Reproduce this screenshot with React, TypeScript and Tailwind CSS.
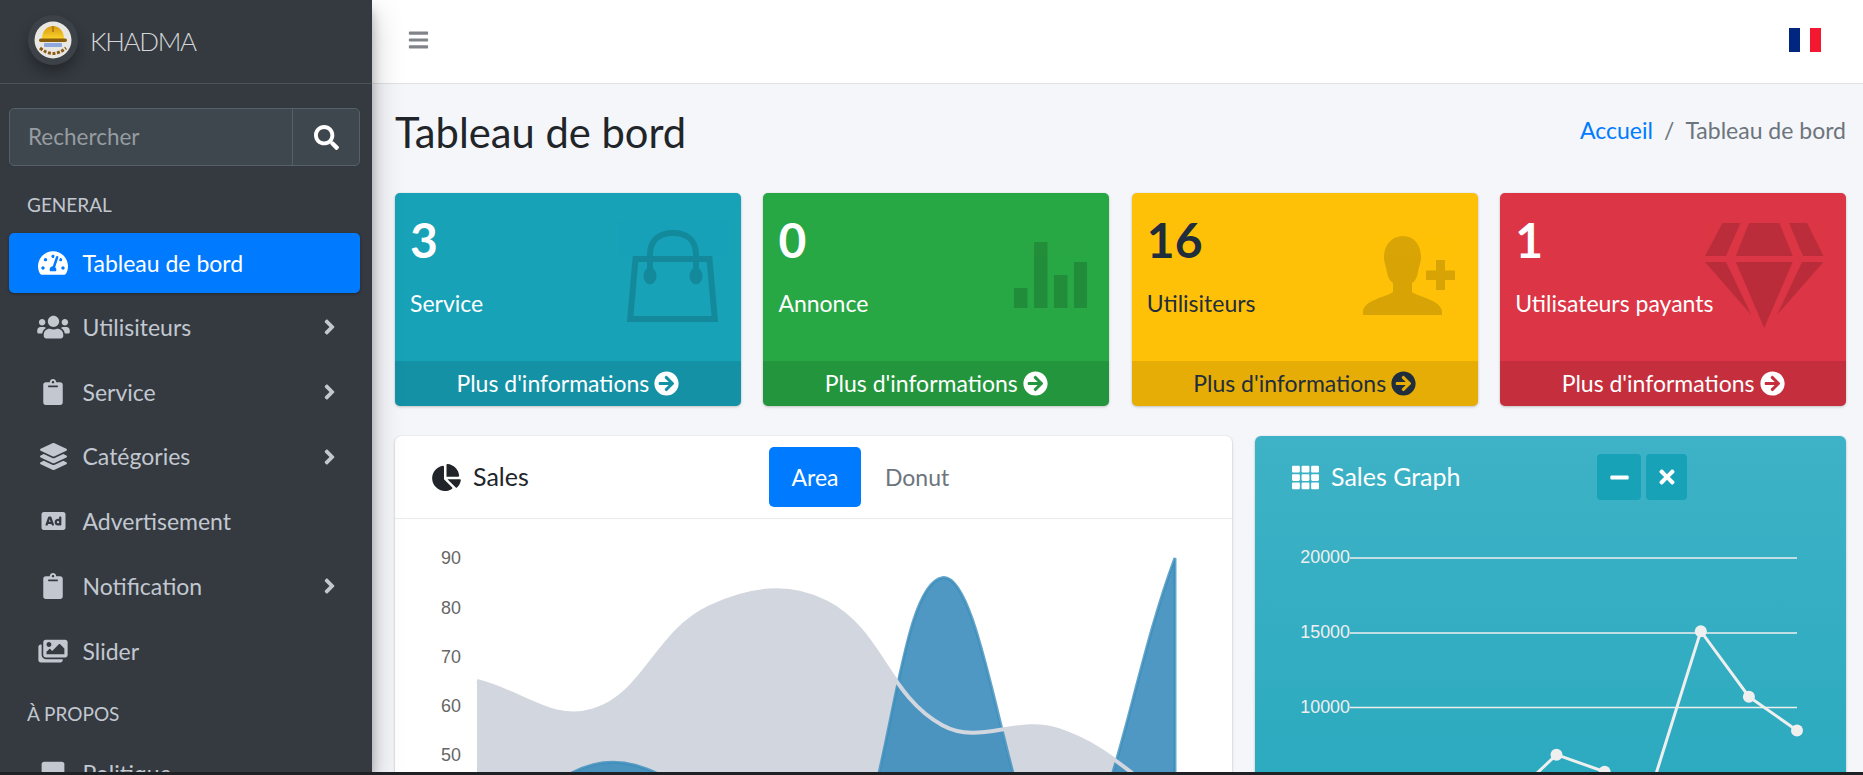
import type { ReactNode } from "react";
import {
  FaAd,
  FaAngleRight,
  FaArrowCircleRight,
  FaBars,
  FaChartPie,
  FaClipboard,
  FaImages,
  FaLayerGroup,
  FaMinus,
  FaSearch,
  FaSquare,
  FaTachometerAlt,
  FaTh,
  FaTimes,
  FaUsers,
} from "react-icons/fa";

type Pt = [number, number];

// same bezier as chart.js with tension 0.4
function spline(pts: Pt[]): string {
  const ctrl = pts.map((p, i) => {
    const prev = pts[i - 1] ?? p;
    const next = pts[i + 1] ?? p;
    const d01 = Math.hypot(p[0] - prev[0], p[1] - prev[1]);
    const d12 = Math.hypot(next[0] - p[0], next[1] - p[1]);
    const fa = (0.4 * d01) / (d01 + d12);
    const fb = (0.4 * d12) / (d01 + d12);
    return {
      inX: p[0] - fa * (next[0] - prev[0]),
      inY: p[1] - fa * (next[1] - prev[1]),
      outX: p[0] + fb * (next[0] - prev[0]),
      outY: p[1] + fb * (next[1] - prev[1]),
    };
  });
  let d = `M${pts[0][0]} ${pts[0][1]}`;
  for (let i = 1; i < pts.length; i++) {
    d += ` C${ctrl[i - 1].outX} ${ctrl[i - 1].outY} ${ctrl[i].inX} ${ctrl[i].inY} ${pts[i][0]} ${pts[i][1]}`;
  }
  return d;
}

const areaX = (i: number) => 477 + i * 116.33;
const areaY = (v: number) => 558 + (90 - v) * 4.92;
const digital: Pt[] = [65, 59, 80, 81, 56, 55, 40].map((v, i) => [areaX(i), areaY(v)]);
const electronics: Pt[] = [28, 48, 40, 19, 86, 27, 90].map((v, i) => [areaX(i), areaY(v)]);

const graphPts: Pt[] = [2666, 2778, 4912, 3767, 6810, 5670, 4820, 15073, 10687, 8432].map((v, i) => [
  1797 - (9 - i) * 48.1,
  856.5 - v * 0.01495,
]);

const navMain = [
  { label: "Utilisiteurs", icon: <FaUsers className="h-[26px] w-[33px]" />, more: true },
  { label: "Service", icon: <FaClipboard className="h-[26px] w-[20px]" />, more: true },
  { label: "Catégories", icon: <FaLayerGroup className="h-[27px] w-[27px]" />, more: true },
  { label: "Advertisement", icon: <FaAd className="h-[24px] w-[27px]" />, more: false },
  { label: "Notification", icon: <FaClipboard className="h-[26px] w-[20px]" />, more: true },
  { label: "Slider", icon: <FaImages className="h-[26px] w-[30px]" />, more: false },
];

function NavItem({ label, icon, more }: { label: string; icon: ReactNode; more?: boolean }) {
  return (
    <div className="flex h-[60px] items-center pr-[12px] pl-[9px] text-[23px] text-[#c2c7d0]">
      <span className="flex w-[73.5px] shrink-0 justify-center pr-[7.5px] pl-[22px]">{icon}</span>
      <span className="flex-1">{label}</span>
      {more && <FaAngleRight className="mr-[22px] h-[24px] w-[17px]" />}
    </div>
  );
}

function Logo() {
  return (
    <div className="mb-[4px] flex h-[50px] w-[50px] shrink-0 items-center justify-center rounded-full bg-[#3c4248] shadow-[0_8px_14px_rgba(0,0,0,0.3)]">
      <svg width="38" height="38" viewBox="0 0 38 38">
        <defs>
          <linearGradient id="helmet" x1="0" y1="0" x2="0" y2="1">
            <stop offset="0" stopColor="#d99a12" />
            <stop offset="1" stopColor="#fbd22c" />
          </linearGradient>
        </defs>
        <circle cx="19" cy="19" r="18.5" fill="#e9e7e2" />
        <path d="M8 18 C8 10 13 5 19 5 C25 5 30 10 30 18 Z" fill="url(#helmet)" />
        <path d="M18 5 H20 V11 H18 Z" fill="#b97f10" />
        <rect x="5" y="17.5" width="28" height="3.5" rx="1.7" fill="#8a5f0c" />
        <rect x="10" y="22" width="18" height="4" rx="1" fill="#8ea7dc" />
        <path d="M6 27 Q19 38 32 27" fill="none" stroke="#8a5a16" strokeWidth="3" strokeDasharray="3 1.6" />
      </svg>
    </div>
  );
}

function Sidebar() {
  return (
    <aside className="relative z-10 flex w-[372px] shrink-0 flex-col overflow-hidden bg-[#343a40] shadow-[0_14px_28px_rgba(0,0,0,0.25),0_10px_10px_rgba(0,0,0,0.22)]">
      <div className="flex h-[84px] shrink-0 items-center gap-[12px] border-b border-[#4b545c] pl-[28px]">
        <Logo />
        <span className="text-[26px] font-light tracking-[-1.3px] text-[#d5d6d8]">KHADMA</span>
      </div>
      <div className="mt-[24px] mr-[12px] ml-[9px] flex h-[58px] shrink-0 rounded-[5px] border border-[#56606a] bg-[#3f474e]">
        <input
          placeholder="Rechercher"
          className="w-[283px] border-r border-[#56606a] bg-transparent pl-[18px] text-[22.5px] outline-none placeholder:text-[#969ca1]"
        />
        <div className="flex flex-1 items-center justify-center text-white">
          <FaSearch className="h-[25px] w-[25px]" />
        </div>
      </div>
      <div className="mt-[24px] flex h-[30px] shrink-0 items-center pl-[27px] text-[19px] text-[#c2c7d0]">GENERAL</div>
      <div className="mt-[13px] mr-[12px] ml-[9px] flex h-[60px] shrink-0 items-center rounded-[5px] bg-[#007bff] text-[23px] text-white shadow-[0_1px_3px_rgba(0,0,0,0.3)]">
        <span className="flex w-[73.5px] shrink-0 justify-center pr-[7.5px] pl-[22px]">
          <FaTachometerAlt className="h-[30px] w-[30px]" />
        </span>
        Tableau de bord
      </div>
      <nav className="mt-[4px] flex shrink-0 flex-col gap-[4.8px]">
        {navMain.map((n) => (
          <NavItem key={n.label} label={n.label} icon={n.icon} more={n.more} />
        ))}
      </nav>
      <div className="mt-[18px] flex h-[30px] shrink-0 items-center pl-[27px] text-[19px] text-[#c2c7d0]">À PROPOS</div>
      <div className="mt-[14px] shrink-0">
        <NavItem label="Politique" icon={<FaSquare className="h-[26px] w-[26px]" />} />
      </div>
    </aside>
  );
}

function BagIcon() {
  return (
    <svg width="91" height="92" viewBox="0 0 91 92" fill="black">
      <path d="M8.5 29 H82.5 L87.8 89 H3.2 Z" fill="none" stroke="black" strokeWidth="6" />
      <path d="M23 46 V25 C23 9 33 3 46 3 C59 3 69 9 69 25 V46" fill="none" stroke="black" strokeWidth="6" />
      <ellipse cx="23" cy="46" rx="6.5" ry="8.5" />
      <ellipse cx="69" cy="46" rx="6.5" ry="8.5" />
    </svg>
  );
}

function BarsIcon() {
  return (
    <svg width="73" height="66" viewBox="0 0 73 66" fill="black">
      <rect x="0" y="46" width="13.5" height="20" />
      <rect x="20" y="0" width="13.5" height="66" />
      <rect x="40" y="33" width="13.5" height="33" />
      <rect x="60" y="20" width="13.5" height="46" />
    </svg>
  );
}

function PersonAddIcon() {
  return (
    <svg width="92" height="79" viewBox="0 0 92 79" fill="black">
      <path d="M40 0 C51 0 58 9 58 21 C58 27 56 30 55 36 C54 42 52 45 49 47 V56 C55 61 79 64 79 76 V79 H0 V76 C0 64 24 61 30 56 V47 C27 45 25 42 24 36 C23 30 21 27 21 21 C21 9 29 0 40 0 Z" />
      <path d="M73 24 H82 V34.6 H92 V44 H82 V54 H73 V44 H63 V34.6 H73 Z" />
    </svg>
  );
}

function GemIcon() {
  return (
    <svg width="119" height="105" viewBox="0 0 119 105" fill="black">
      <path d="M17.5 0 H35.5 L21 33 H0 Z" />
      <path d="M44 0 H74.4 L87.7 33 H30.8 Z" />
      <path d="M84 0 H102 L118.5 33 H98 Z" />
      <path d="M0 39 H21 L46.4 92 Z" />
      <path d="M30.8 39 H87.7 L59.2 105 Z" />
      <path d="M97 39 H118.5 L72 92 Z" />
    </svg>
  );
}

const boxes = [
  { value: "3", label: "Service", bg: "bg-[#17a2b8]", text: "text-white", icon: <BagIcon />, pos: "top-[37px] right-[23px]" },
  { value: "0", label: "Annonce", bg: "bg-[#28a745]", text: "text-white", icon: <BarsIcon />, pos: "top-[49px] right-[22px]" },
  { value: "16", label: "Utilisiteurs", bg: "bg-[#ffc107]", text: "text-[#1f2d3d]", icon: <PersonAddIcon />, pos: "top-[43px] right-[23px]" },
  { value: "1", label: "Utilisateurs payants", bg: "bg-[#dc3545]", text: "text-white", icon: <GemIcon />, pos: "top-[30px] right-[22px]" },
];

function SmallBox({ value, label, bg, text, icon, pos }: (typeof boxes)[number]) {
  return (
    <div className={`relative flex h-[213px] flex-col overflow-hidden rounded-[5px] shadow-[0_0_1px_rgba(0,0,0,0.125),0_1px_3px_rgba(0,0,0,0.2)] ${bg} ${text}`}>
      <div className="flex-1 px-[15px] pt-[15px]">
        <div className="text-[48px] leading-[64px] font-bold">{value}</div>
        <div className="mt-[13px] text-[23px] leading-[36px]">{label}</div>
      </div>
      <div className={`absolute opacity-15 ${pos}`}>{icon}</div>
      <div className="flex h-[45px] items-center justify-center gap-[5px] bg-black/10 text-[23px]">
        Plus d'informations
        <FaArrowCircleRight className="h-[25px] w-[25px]" />
      </div>
    </div>
  );
}

function SalesCard() {
  return (
    <div className="h-[600px] overflow-hidden rounded-[6px] bg-white shadow-[0_0_1px_rgba(0,0,0,0.125),0_1px_3px_rgba(0,0,0,0.2)]">
      <div className="flex h-[83px] items-center border-b border-[#eaecef] pl-[37px]">
        <div className="flex w-[337px] items-center gap-[12px] text-[25px] text-[#212529]">
          <FaChartPie className="h-[27px] w-[29px]" />
          Sales
        </div>
        <div className="flex h-[60px] w-[92px] items-center justify-center rounded-[5px] bg-[#007bff] text-[23px] text-white">Area</div>
        <div className="pl-[24px] text-[23px] text-[#6c757d]">Donut</div>
      </div>
      <svg width="837" height="400" viewBox="395 519 837 400" className="block">
        <path d={`${spline(digital)} V919 H477 Z`} fill="#d2d6de" />
        <path d={`${spline(electronics)} V919 H477 Z`} fill="#3c8dbc" fillOpacity="0.9" stroke="#3c8dbc" strokeOpacity="0.8" strokeWidth="3" />
        <path d={spline(digital)} fill="none" stroke="#d2d6de" strokeWidth="4" />
        {[
          ["90", 564],
          ["80", 614],
          ["70", 663],
          ["60", 712],
          ["50", 761],
        ].map(([t, y]) => (
          <text key={t} x="461" y={y} textAnchor="end" fontSize="17.9" fill="#666" fontFamily="Liberation Sans, sans-serif">
            {t}
          </text>
        ))}
      </svg>
    </div>
  );
}

function GraphCard() {
  return (
    <div className="h-[600px] overflow-hidden rounded-[6px] bg-[linear-gradient(180deg,#3eb2c6_0%,#2caabf_57%)] text-white shadow-[0_0_1px_rgba(0,0,0,0.125),0_1px_3px_rgba(0,0,0,0.2)]">
      <div className="flex h-[82px] items-center pl-[37px]">
        <div className="flex w-[305px] items-center gap-[12px] text-[25px]">
          <FaTh className="h-[27px] w-[27px]" />
          Sales Graph
        </div>
        <div className="flex gap-[5px]">
          <div className="flex h-[46px] w-[44px] items-center justify-center rounded-[4px] bg-[#17a2b8]">
            <FaMinus className="h-[21px] w-[21px]" />
          </div>
          <div className="flex h-[46px] w-[41px] items-center justify-center rounded-[4px] bg-[#17a2b8]">
            <FaTimes className="h-[22px] w-[22px]" />
          </div>
        </div>
      </div>
      <svg width="591" height="400" viewBox="1255 518 591 400" className="block">
        {[
          ["20000", 558],
          ["15000", 633],
          ["10000", 707.5],
        ].map(([t, y]) => (
          <g key={t}>
            <line x1="1350" x2="1797" y1={y} y2={y} stroke="#efefef" strokeWidth="1.5" />
            <text x="1350" y={Number(y) + 5} textAnchor="end" fontSize="17.9" fill="#efefef" fontFamily="Liberation Sans, sans-serif">
              {t}
            </text>
          </g>
        ))}
        <polyline points={graphPts.map((p) => p.join(",")).join(" ")} fill="none" stroke="#efefef" strokeWidth="3" />
        {graphPts.map((p) => (
          <circle key={p[0]} cx={p[0]} cy={p[1]} r="6" fill="#efefef" />
        ))}
      </svg>
    </div>
  );
}

export default function App() {
  return (
    <div className="flex h-[775px] w-[1863px] flex-col overflow-hidden bg-[#202124] font-[family-name:Lato,sans-serif]">
      <div className="flex h-[772px] overflow-hidden">
        <Sidebar />
        <main className="flex min-w-0 flex-1 flex-col overflow-hidden bg-[#f4f6f9]">
          <header className="flex h-[84px] shrink-0 items-center justify-between border-b border-[#dee2e6] bg-white pr-[42px] pb-[3px] pl-[36px]">
            <FaBars className="h-[22px] w-[21px] text-[#808488]" />
            <div className="flex h-[24px] w-[32px]">
              <div className="flex-1 bg-[#00267f]" />
              <div className="flex-1 bg-white" />
              <div className="flex-1 bg-[#f31830]" />
            </div>
          </header>
          <div className="pr-[17px] pl-[23px]">
            <div className="box-content flex h-[64px] items-center justify-between pt-[16px]">
              <h1 className="text-[41.7px] text-[#212529]">Tableau de bord</h1>
              <div className="mb-[4px] flex items-center gap-[11px] text-[23px] text-[#6c757d]">
                <span className="text-[#007bff]">Accueil</span>
                <span>/</span>
                <span>Tableau de bord</span>
              </div>
            </div>
            <div className="mt-[29px] grid grid-cols-4 gap-x-[22.6px]">
              {boxes.map((b) => (
                <SmallBox key={b.label} {...b} />
              ))}
            </div>
            <div className="mt-[30px] grid grid-cols-[837px_591px] gap-x-[23px]">
              <SalesCard />
              <GraphCard />
            </div>
          </div>
        </main>
      </div>
    </div>
  );
}
